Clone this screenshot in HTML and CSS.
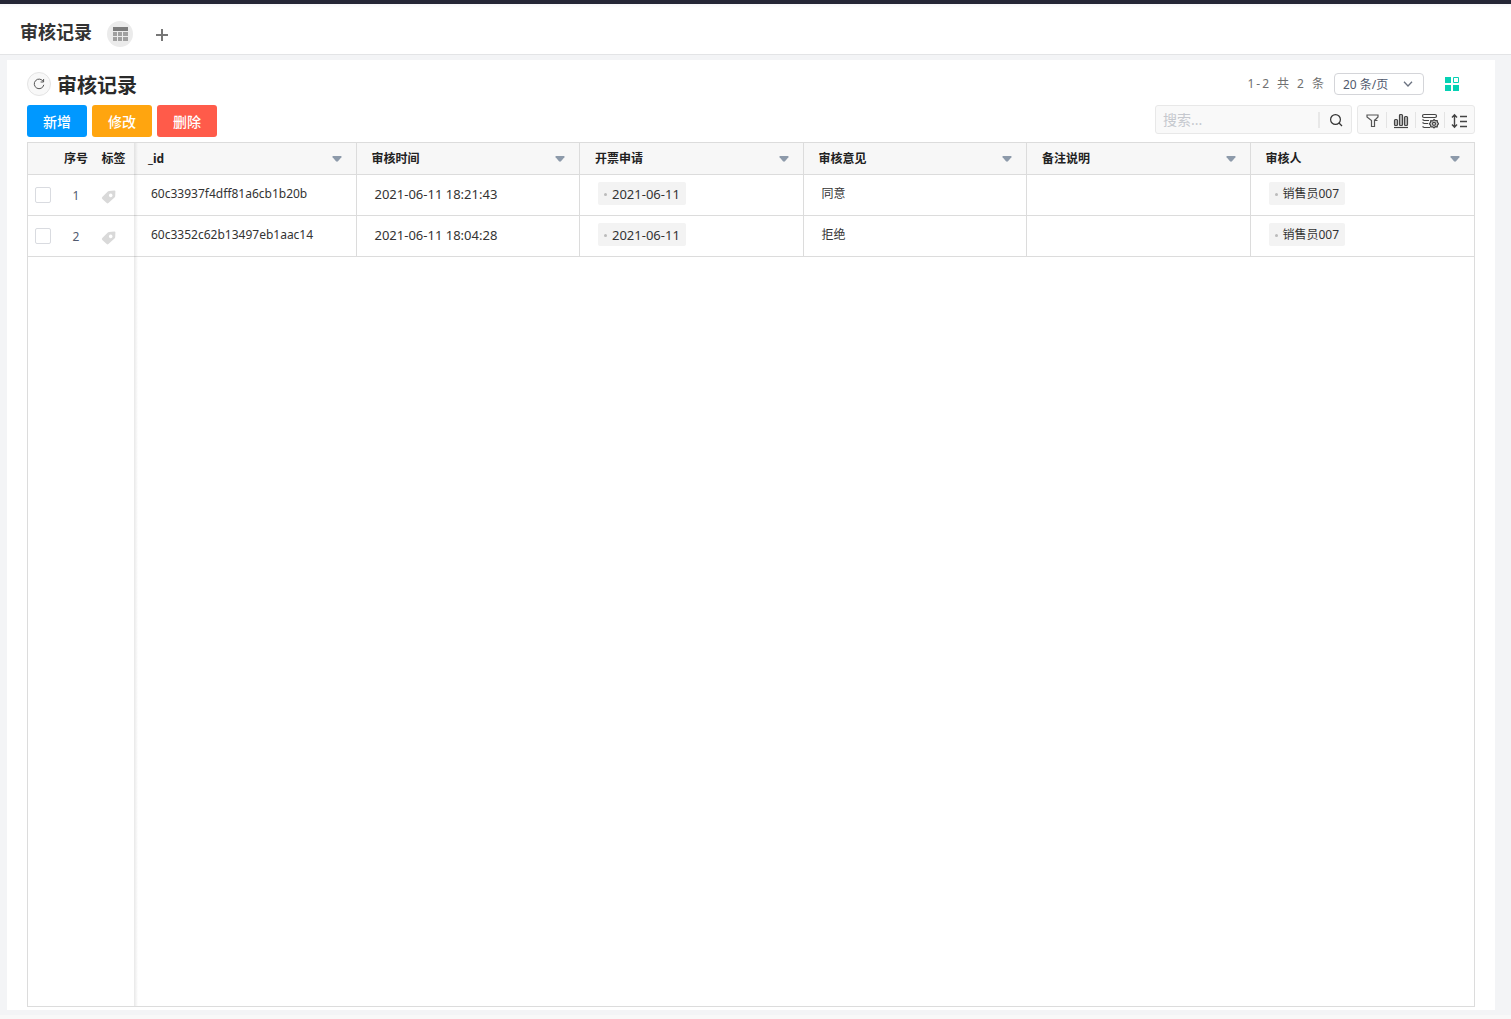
FILE: index.html
```html
<!DOCTYPE html>
<html lang="zh-CN">
<head>
<meta charset="utf-8">
<meta name="viewport" content="width=device-width, initial-scale=1">
<title>审核记录</title>
<link rel="stylesheet" href="styles.css">
</head>
<body>
<svg class="sprite" aria-hidden="true">
  <symbol id="tag" viewBox="0 0 16 16"><path fill="#d9d9d9" fill-rule="evenodd" d="M8 2 13.300 1.400Q14.500 1.300 14.400 2.500L14.200 7Q14.200 7.800 13.500 8.400L7.400 14Q6.500 14.800 5.700 14L1.300 9.900Q.4 9 1.300 8.100L6.800 2.600Q7.300 2.100 8 2ZM9.700 4.600a1.800 1.800 0 1 0 .01 0Z"/></symbol>
  <symbol id="caret" viewBox="0 0 10 6"><path fill="#8d9aaa" d="M1.200 0h7.600q1.200.2.600 1.200L6 5.300q-1 .9-2 0L.6 1.200Q0 .2 1.200 0Z"/></symbol>
</svg>
<header class="tabs">
  <h1 class="tabs-title">审核记录</h1>
  <button class="view-btn" type="button" aria-label="表格视图">
    <svg width="16" height="16" viewBox="0 0 16 16"><path fill="#7c7c7c" d="M1 1h15v4H1z"/><path fill="#a0a0a0" d="M1 6h4v4H1zM6 6h4v4H6zM11 6h5v4h-5zM1 11h4v4H1zM6 11h4v4H6zM11 11h5v4h-5z"/></svg>
  </button>
  <button class="add-btn" type="button" aria-label="添加视图">
    <svg width="14" height="14" viewBox="0 0 14 14"><path fill="none" stroke="#777" stroke-width="2" d="M7 1v12M1 7h12"/></svg>
  </button>
</header>
<main class="card">
  <div class="title-row">
    <button class="refresh" type="button" aria-label="刷新">
      <svg width="12" height="12" viewBox="0 0 12 12" fill="none" stroke="#555"><path d="M10.300 3.600A4.800 4.800 0 1 0 10.800 6.800M10.600 1v3H7.600"/></svg>
    </button>
    <h2 class="title">审核记录</h2>
    <div class="pager">
      <p class="count"><span class="range"><span>1</span><span>-</span><span>2</span></span><span>共</span><span>2</span><span>条</span></p>
      <div class="size">
        <select aria-label="每页条数"><option>20 条/页</option></select>
        <svg width="10" height="6" viewBox="0 0 10 6"><path fill="none" stroke="#6b7280" stroke-width="1.300" d="M1 .8 5 5 9 .8"/></svg>
      </div>
      <button class="layout-btn" type="button" aria-label="切换布局">
        <svg width="14" height="14" viewBox="0 0 14 14"><path fill="#06d1b4" d="M0 0h6v6H0zM0 8h6v6H0zM8 8h6v6H8z"/><path fill="none" stroke="#06d1b4" d="M8.500 .5h5v5h-5z"/></svg>
      </button>
    </div>
  </div>
  <div class="tool-row">
    <button class="btn btn-add" type="button">新增</button>
    <button class="btn btn-edit" type="button">修改</button>
    <button class="btn btn-delete" type="button">删除</button>
    <div class="tools">
      <div class="search">
        <input type="text" placeholder="搜索..." aria-label="搜索">
        <button type="button" aria-label="搜索">
          <svg width="14" height="14" viewBox="0 0 14 14" fill="none" stroke="#333" stroke-width="1.200"><circle cx="6.500" cy="6.500" r="4.900"/><path d="m10 10 3 3"/></svg>
        </button>
      </div>
      <div class="icons">
        <button type="button" aria-label="筛选"><svg width="18" height="18" viewBox="0 0 18 18" fill="none" stroke="#555" stroke-width="1.200"><path d="M8.500 15V8.500L4 5V3h11v2l-3.500 3.500M11.500 7.500V15M11 8.500h3.500M8.500 14.500h3"/></svg></button>
        <button type="button" aria-label="统计"><svg width="18" height="18" viewBox="0 0 18 18" fill="#bbb" stroke="#444" stroke-width="1.200"><rect x="2.500" y="7.500" width="3" height="6" rx="1"/><rect x="7.500" y="2.500" width="3" height="11" rx="1"/><rect x="12.500" y="4.500" width="3" height="9" rx="1"/><path d="M2 15.500h14"/></svg></button>
        <button type="button" aria-label="字段设置"><svg width="18" height="18" viewBox="0 0 18 18" fill="none" stroke="#444" stroke-width="1.200"><rect x="1.500" y="2.500" width="14" height="3" rx="1.500"/><path d="M3 8.500h5M3 11.500h4M3 15.500h6M1.500 7.500l1.500 1M1.500 10.500l1.500 1M1.500 14.500l1.500 1"/><path fill="#ccc" d="m13 7.500 1.300 1.200 1.900-.1.300 1.800 1.200 1.300-1.200 1.300-.3 1.800-1.900-.1L13 16l-1.300-1.200-1.900.1-.3-1.800-1.200-1.300 1.200-1.300.3-1.800 1.900.1Z"/><circle cx="13" cy="11.800" r="1.500" fill="#fff"/></svg></button>
        <button type="button" aria-label="行高"><svg width="18" height="18" viewBox="0 0 18 18" fill="none" stroke="#444" stroke-width="1.400"><path d="M4.500 3v12M2 5.500l2.500-2.700L7 5.500M2 12.500l2.500 2.700L7 12.500M10 4.500h7M10 9.500h7M10 14.500h7"/></svg></button>
      </div>
    </div>
  </div>
  <div class="grid">
    <table>
      <colgroup><col class="c-check"><col class="c-num"><col class="c-tag"><col><col><col><col><col><col></colgroup>
      <thead>
        <tr>
          <th></th><th class="mid">序号</th><th class="mid">标签</th>
          <th><div class="head"><span>_id</span><svg width="10" height="6"><use href="#caret"/></svg></div></th>
          <th><div class="head"><span>审核时间</span><svg width="10" height="6"><use href="#caret"/></svg></div></th>
          <th><div class="head"><span>开票申请</span><svg width="10" height="6"><use href="#caret"/></svg></div></th>
          <th><div class="head"><span>审核意见</span><svg width="10" height="6"><use href="#caret"/></svg></div></th>
          <th><div class="head"><span>备注说明</span><svg width="10" height="6"><use href="#caret"/></svg></div></th>
          <th><div class="head"><span>审核人</span><svg width="10" height="6"><use href="#caret"/></svg></div></th>
        </tr>
      </thead>
      <tbody>
        <tr>
          <td class="check"><input type="checkbox" aria-label="选择第1行"></td>
          <td class="num">1</td>
          <td class="tag"><svg width="16" height="16"><use href="#tag"/></svg></td>
          <td class="text id">60c33937f4dff81a6cb1b20b</td>
          <td class="text">2021-06-11 18:21:43</td>
          <td class="text"><span class="chip">2021-06-11</span></td>
          <td class="text cn">同意</td>
          <td></td>
          <td class="text"><span class="chip cn">销售员007</span></td>
        </tr>
        <tr>
          <td class="check"><input type="checkbox" aria-label="选择第2行"></td>
          <td class="num">2</td>
          <td class="tag"><svg width="16" height="16"><use href="#tag"/></svg></td>
          <td class="text id">60c3352c62b13497eb1aac14</td>
          <td class="text">2021-06-11 18:04:28</td>
          <td class="text"><span class="chip">2021-06-11</span></td>
          <td class="text cn">拒绝</td>
          <td></td>
          <td class="text"><span class="chip cn">销售员007</span></td>
        </tr>
      </tbody>
    </table>
  </div>
</main>
</body>
</html>
```
FILE: styles.css
```css
* { box-sizing: border-box; }

body {
  margin: 0;
  min-height: 100vh;
  display: flex;
  flex-direction: column;
  background: #f3f4f6;
  border-top: 4px solid #252636;
  border-bottom: 4px solid #f8f8f8;
  color: #333;
  font: 12px/18px "Noto Sans", "Noto Sans CJK SC", sans-serif;
}

h1, h2, p { margin: 0; }
svg { display: block; flex: none; }
button, input, select { font: inherit; color: inherit; }
button { padding: 0; border: 0; background: none; cursor: pointer; }
.sprite { position: absolute; width: 0; height: 0; }

.tabs {
  display: flex;
  align-items: center;
  height: 51px;
  padding: 10px 20px 0;
  background: linear-gradient(#f6f6f8, #fff 4px);
  border-bottom: 1px solid #e3e4e6;
}
.tabs-title { font-size: 18px; line-height: 24px; padding-bottom: 4px; }
.view-btn {
  display: grid;
  place-items: center;
  width: 26px;
  height: 26px;
  margin-left: 15px;
  border-radius: 50%;
  background: #ebebeb;
}
.add-btn { margin: 2px 0 0 22px; }

.card {
  flex: 1;
  display: flex;
  flex-direction: column;
  margin: 5px 16px 5px 7px;
  padding: 10px 20px 3px;
  background: #fff;
}

.title-row { display: flex; align-items: center; height: 28px; }
.refresh {
  display: grid;
  place-items: center;
  width: 24px;
  height: 24px;
  border: 1px solid #e4e4e4;
  border-radius: 50%;
  background: #f8f8f8;
}
.title { margin-left: 6px; padding-top: 3px; font-size: 20px; line-height: 28px; color: #2a2a2a; }
.pager { display: flex; align-items: center; margin-left: auto; padding-right: 16px; }
.count { display: flex; gap: 8px; color: #707070; }
.range { display: flex; gap: 2px; }
.size { position: relative; margin-left: 10px; }
.size select {
  appearance: none;
  display: block;
  width: 90px;
  height: 22px;
  padding: 1px 8px 0;
  border: 1px solid #d4d5d9;
  border-radius: 4px;
  background: #fff;
  color: #515a6e;
}
.size svg { position: absolute; right: 11px; top: 8px; pointer-events: none; }
.layout-btn { margin-left: 21px; }

.tool-row { display: flex; gap: 5px; padding: 7px 0 5px; }
.btn {
  width: 60px;
  height: 32px;
  padding-top: 2px;
  border-radius: 3px;
  color: #fff;
  font-size: 14px;
  font-weight: 500;
}
.btn-add { background: #0098ff; }
.btn-edit { background: #ffa50f; }
.btn-delete { background: #ff5b4a; }
.tools { display: flex; gap: 5px; height: 29px; margin-left: auto; }
.search, .icons {
  display: flex;
  align-items: center;
  border: 1px solid #e8e8e8;
  border-radius: 3px;
  background: #f9f9f9;
}
.search { width: 197px; }
.search input {
  flex: 1;
  min-width: 0;
  padding: 0 7px;
  border: 0;
  outline: 0;
  background: none;
  font-size: 14px;
}
.search input::placeholder { color: #c5c8ce; }
.search button {
  display: grid;
  place-items: center;
  width: 33px;
  height: 16px;
  border-left: 2px solid #e8e8e8;
}
.icons { padding-right: 1px; }
.icons button {
  display: grid;
  place-items: center;
  width: 29px;
  height: 16px;
  border-left: 1px solid #e4e4e4;
}
.icons button:first-child { width: 28px; border-left: 0; }

.grid {
  position: relative;
  flex: 1;
  border: 1px solid #dcdcdc;
}
.grid::after {
  content: "";
  position: absolute;
  top: 0;
  bottom: 0;
  left: 106px;
  width: 4px;
  background: linear-gradient(90deg, #00000017, #0000);
}
table { width: 100%; table-layout: fixed; border-collapse: separate; border-spacing: 0; }
.c-check { width: 30px; }
.c-num { width: 36px; }
.c-tag { width: 39px; }
th, td { padding: 0; border: solid #dcdcdc; border-width: 0 1px 1px 0; text-align: left; }
th:nth-child(-n+3), td:nth-child(-n+3) { border-right: 0; }
th:last-child, td:last-child { border-right: 0; }
th { height: 32px; background: #f7f7f7; color: #222; }
th.mid { text-align: center; }
.head { display: flex; align-items: center; justify-content: space-between; padding: 0 14px 0 15px; }
td { height: 41px; vertical-align: middle; }
.check { padding-left: 7px; }
.check input {
  appearance: none;
  display: block;
  width: 16px;
  height: 16px;
  margin: 0;
  border: 1px solid #d9dbe0;
  border-radius: 2px;
  background: #fff;
}
.num { padding-top: 2px; text-align: center; color: #515a6e; }
.tag { padding: 4px 0 0 7px; }
.text { padding: 0 0 3px 18px; font-size: 13px; }
.text.cn, .text.id, .chip.cn { font-size: 12px; }
.chip {
  display: inline-flex;
  align-items: center;
  gap: 5px;
  height: 23px;
  padding: 1px 6px 0;
  border-radius: 2px;
  background: #f3f3f3;
  vertical-align: middle;
}
.chip::before {
  content: "";
  width: 3px;
  height: 3px;
  border-radius: 50%;
  background: #bbb;
}
```
